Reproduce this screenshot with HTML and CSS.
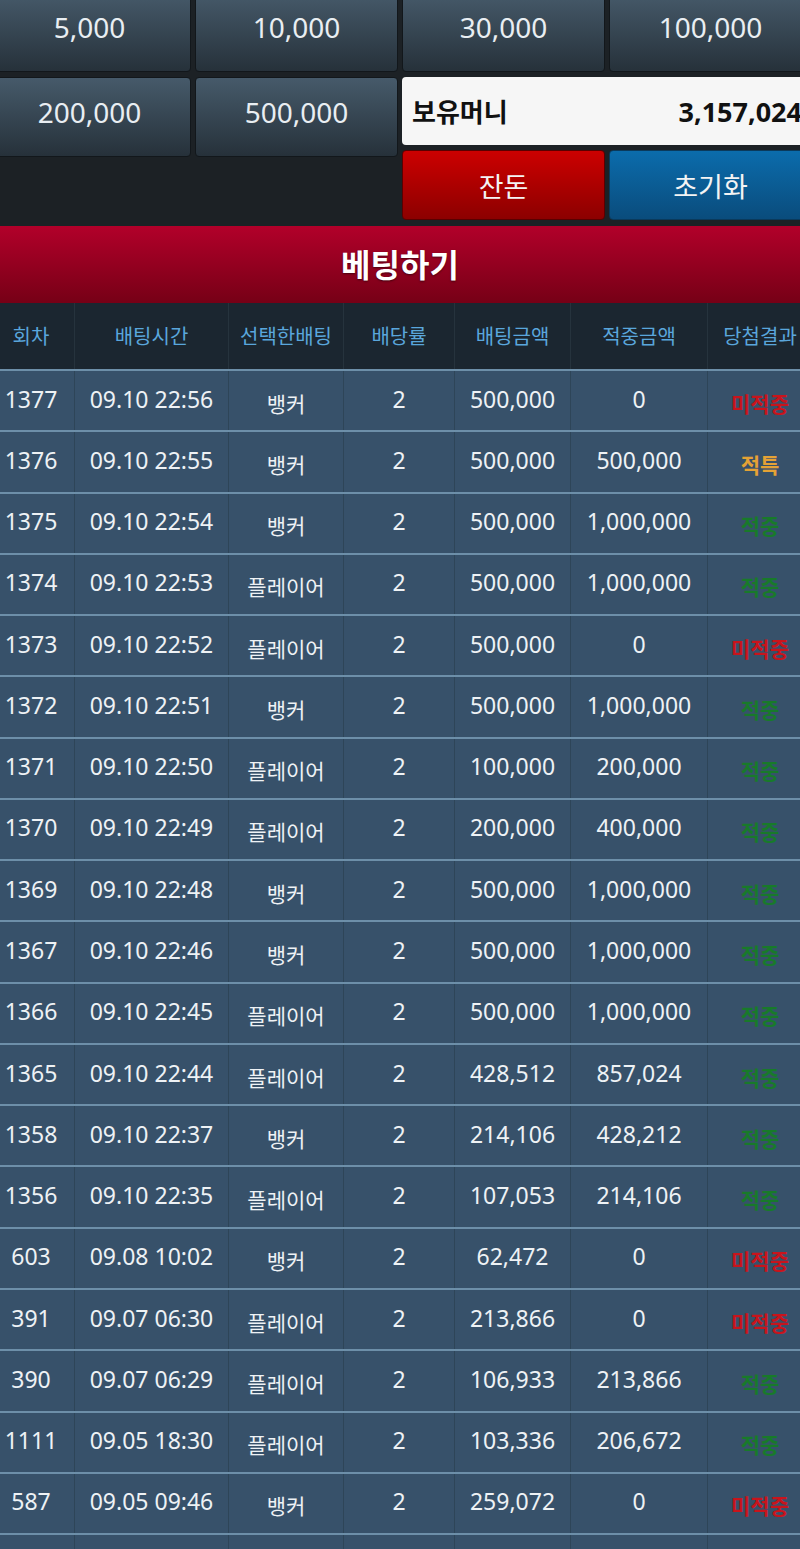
FILE: index.html
```html
<!DOCTYPE html>
<html lang="ko">
<head>
<meta charset="utf-8">
<title>베팅하기</title>
<link rel="stylesheet" href="styles.css">
</head>
<body>
<div class="page">
  <div class="chips">
    <div class="chip-row">
      <div class="btn">5,000</div>
      <div class="btn">10,000</div>
      <div class="btn">30,000</div>
      <div class="btn">100,000</div>
    </div>
    <div class="chip-row">
      <div class="half">
        <div class="btn">200,000</div>
        <div class="btn">500,000</div>
      </div>
      <div class="panel">
        <div class="money"><span class="money-label">보유머니</span><span class="money-value">3,157,024</span></div>
        <div class="actions">
          <div class="act act-red">잔돈</div>
          <div class="act act-blue">초기화</div>
        </div>
      </div>
    </div>
  </div>

  <div class="banner">베팅하기</div>

  <div class="table">
    <div class="row head">
      <div class="cell">회차</div>
      <div class="cell">배팅시간</div>
      <div class="cell">선택한배팅</div>
      <div class="cell">배당률</div>
      <div class="cell">배팅금액</div>
      <div class="cell">적중금액</div>
      <div class="cell">당첨결과</div>
    </div>
    <div class="row"><div class="cell num">1377</div><div class="cell num">09.10 22:56</div><div class="cell ko">뱅커</div><div class="cell num">2</div><div class="cell num">500,000</div><div class="cell num">0</div><div class="cell res lose">미적중</div></div>
    <div class="row"><div class="cell num">1376</div><div class="cell num">09.10 22:55</div><div class="cell ko">뱅커</div><div class="cell num">2</div><div class="cell num">500,000</div><div class="cell num">500,000</div><div class="cell res tie">적특</div></div>
    <div class="row"><div class="cell num">1375</div><div class="cell num">09.10 22:54</div><div class="cell ko">뱅커</div><div class="cell num">2</div><div class="cell num">500,000</div><div class="cell num">1,000,000</div><div class="cell res win">적중</div></div>
    <div class="row"><div class="cell num">1374</div><div class="cell num">09.10 22:53</div><div class="cell ko">플레이어</div><div class="cell num">2</div><div class="cell num">500,000</div><div class="cell num">1,000,000</div><div class="cell res win">적중</div></div>
    <div class="row"><div class="cell num">1373</div><div class="cell num">09.10 22:52</div><div class="cell ko">플레이어</div><div class="cell num">2</div><div class="cell num">500,000</div><div class="cell num">0</div><div class="cell res lose">미적중</div></div>
    <div class="row"><div class="cell num">1372</div><div class="cell num">09.10 22:51</div><div class="cell ko">뱅커</div><div class="cell num">2</div><div class="cell num">500,000</div><div class="cell num">1,000,000</div><div class="cell res win">적중</div></div>
    <div class="row"><div class="cell num">1371</div><div class="cell num">09.10 22:50</div><div class="cell ko">플레이어</div><div class="cell num">2</div><div class="cell num">100,000</div><div class="cell num">200,000</div><div class="cell res win">적중</div></div>
    <div class="row"><div class="cell num">1370</div><div class="cell num">09.10 22:49</div><div class="cell ko">플레이어</div><div class="cell num">2</div><div class="cell num">200,000</div><div class="cell num">400,000</div><div class="cell res win">적중</div></div>
    <div class="row"><div class="cell num">1369</div><div class="cell num">09.10 22:48</div><div class="cell ko">뱅커</div><div class="cell num">2</div><div class="cell num">500,000</div><div class="cell num">1,000,000</div><div class="cell res win">적중</div></div>
    <div class="row"><div class="cell num">1367</div><div class="cell num">09.10 22:46</div><div class="cell ko">뱅커</div><div class="cell num">2</div><div class="cell num">500,000</div><div class="cell num">1,000,000</div><div class="cell res win">적중</div></div>
    <div class="row"><div class="cell num">1366</div><div class="cell num">09.10 22:45</div><div class="cell ko">플레이어</div><div class="cell num">2</div><div class="cell num">500,000</div><div class="cell num">1,000,000</div><div class="cell res win">적중</div></div>
    <div class="row"><div class="cell num">1365</div><div class="cell num">09.10 22:44</div><div class="cell ko">플레이어</div><div class="cell num">2</div><div class="cell num">428,512</div><div class="cell num">857,024</div><div class="cell res win">적중</div></div>
    <div class="row"><div class="cell num">1358</div><div class="cell num">09.10 22:37</div><div class="cell ko">뱅커</div><div class="cell num">2</div><div class="cell num">214,106</div><div class="cell num">428,212</div><div class="cell res win">적중</div></div>
    <div class="row"><div class="cell num">1356</div><div class="cell num">09.10 22:35</div><div class="cell ko">플레이어</div><div class="cell num">2</div><div class="cell num">107,053</div><div class="cell num">214,106</div><div class="cell res win">적중</div></div>
    <div class="row"><div class="cell num">603</div><div class="cell num">09.08 10:02</div><div class="cell ko">뱅커</div><div class="cell num">2</div><div class="cell num">62,472</div><div class="cell num">0</div><div class="cell res lose">미적중</div></div>
    <div class="row"><div class="cell num">391</div><div class="cell num">09.07 06:30</div><div class="cell ko">플레이어</div><div class="cell num">2</div><div class="cell num">213,866</div><div class="cell num">0</div><div class="cell res lose">미적중</div></div>
    <div class="row"><div class="cell num">390</div><div class="cell num">09.07 06:29</div><div class="cell ko">플레이어</div><div class="cell num">2</div><div class="cell num">106,933</div><div class="cell num">213,866</div><div class="cell res win">적중</div></div>
    <div class="row"><div class="cell num">1111</div><div class="cell num">09.05 18:30</div><div class="cell ko">플레이어</div><div class="cell num">2</div><div class="cell num">103,336</div><div class="cell num">206,672</div><div class="cell res win">적중</div></div>
    <div class="row"><div class="cell num">587</div><div class="cell num">09.05 09:46</div><div class="cell ko">뱅커</div><div class="cell num">2</div><div class="cell num">259,072</div><div class="cell num">0</div><div class="cell res lose">미적중</div></div>
    <div class="row"><div class="cell"></div><div class="cell"></div><div class="cell"></div><div class="cell"></div><div class="cell"></div><div class="cell"></div><div class="cell"></div></div>
  </div>
</div>
</body>
</html>
```

FILE: styles.css
```css
* { box-sizing: border-box; }

html, body {
  margin: 0;
  padding: 0;
  background: #1c2125;
  overflow: hidden;
}

body {
  font-family: "Noto Sans", "Noto Sans CJK KR", sans-serif;
  color: #eef2f5;
}

.page {
  width: 824px;
  margin-left: -12px;
}

.chips {
  margin-top: -8px;
  display: flex;
  flex-direction: column;
  gap: 5px;
}

.chip-row {
  display: flex;
  gap: 4px;
}

.half {
  display: flex;
  gap: 4px;
  width: 410px;
  height: 80px;
}

.btn {
  width: 203px;
  height: 80px;
  border: 1px solid #12171b;
  border-radius: 4px;
  background: linear-gradient(#465a6a, #26313a);
  display: flex;
  align-items: center;
  justify-content: center;
  font-size: 28px;
  color: #e9eef2;
  padding-bottom: 10px;
}

.panel {
  width: 410px;
  display: flex;
  flex-direction: column;
  gap: 5px;
}

.money {
  height: 68px;
  background: #f6f6f6;
  border-radius: 4px;
  display: flex;
  align-items: center;
  justify-content: space-between;
  padding: 0 10px 0 10px;
  color: #111;
  font-weight: bold;
}

.money-label {
  font-size: 26px;
}

.money-value {
  font-size: 27px;
}

.actions {
  display: flex;
  gap: 4px;
}

.act {
  width: 203px;
  height: 70px;
  border-radius: 4px;
  display: flex;
  align-items: center;
  justify-content: center;
  font-size: 27px;
  color: #f4f4f4;
}

.act-red {
  background: linear-gradient(#cc0000, #8c0000);
  border: 1px solid #5a0000;
}

.act-blue {
  background: linear-gradient(#0b6cac, #0a4c7c);
  border: 1px solid #0a3a5c;
}

.banner {
  margin-top: 6px;
  height: 77px;
  background: linear-gradient(#b2002a, #760016);
  display: flex;
  align-items: center;
  justify-content: center;
  font-size: 32px;
  font-weight: bold;
  color: #ffffff;
  text-shadow: 0 1px 2px rgba(0, 0, 0, 0.5);
  padding-bottom: 4px;
}

.row {
  display: grid;
  grid-template-columns: 86px 154px 115px 111px 116px 137px 105px;
  height: 61.28px;
  background: #37516a;
  border-top: 2px solid #6d8fa9;
}

.row.head {
  height: 66px;
  background: #1b2630;
  border-top: none;
}

.cell {
  display: flex;
  align-items: center;
  justify-content: center;
  border-left: 1px solid #2e4558;
  white-space: nowrap;
  padding-bottom: 4px;
}

.cell:first-child {
  border-left: none;
}

.head .cell {
  font-size: 20px;
  color: #5aa6dc;
  border-left: 1px solid #26333d;
  padding-bottom: 2px;
}

.head .cell:first-child {
  border-left: none;
}

.num {
  font-size: 23px;
}

.ko {
  font-size: 21px;
  padding-bottom: 0;
  padding-top: 4px;
}

.res {
  font-size: 21px;
  font-weight: bold;
  padding-bottom: 0;
  padding-top: 4px;
}

.lose { color: #c8141c; }
.win { color: #187a2a; }
.tie { color: #e4a235; }
```
